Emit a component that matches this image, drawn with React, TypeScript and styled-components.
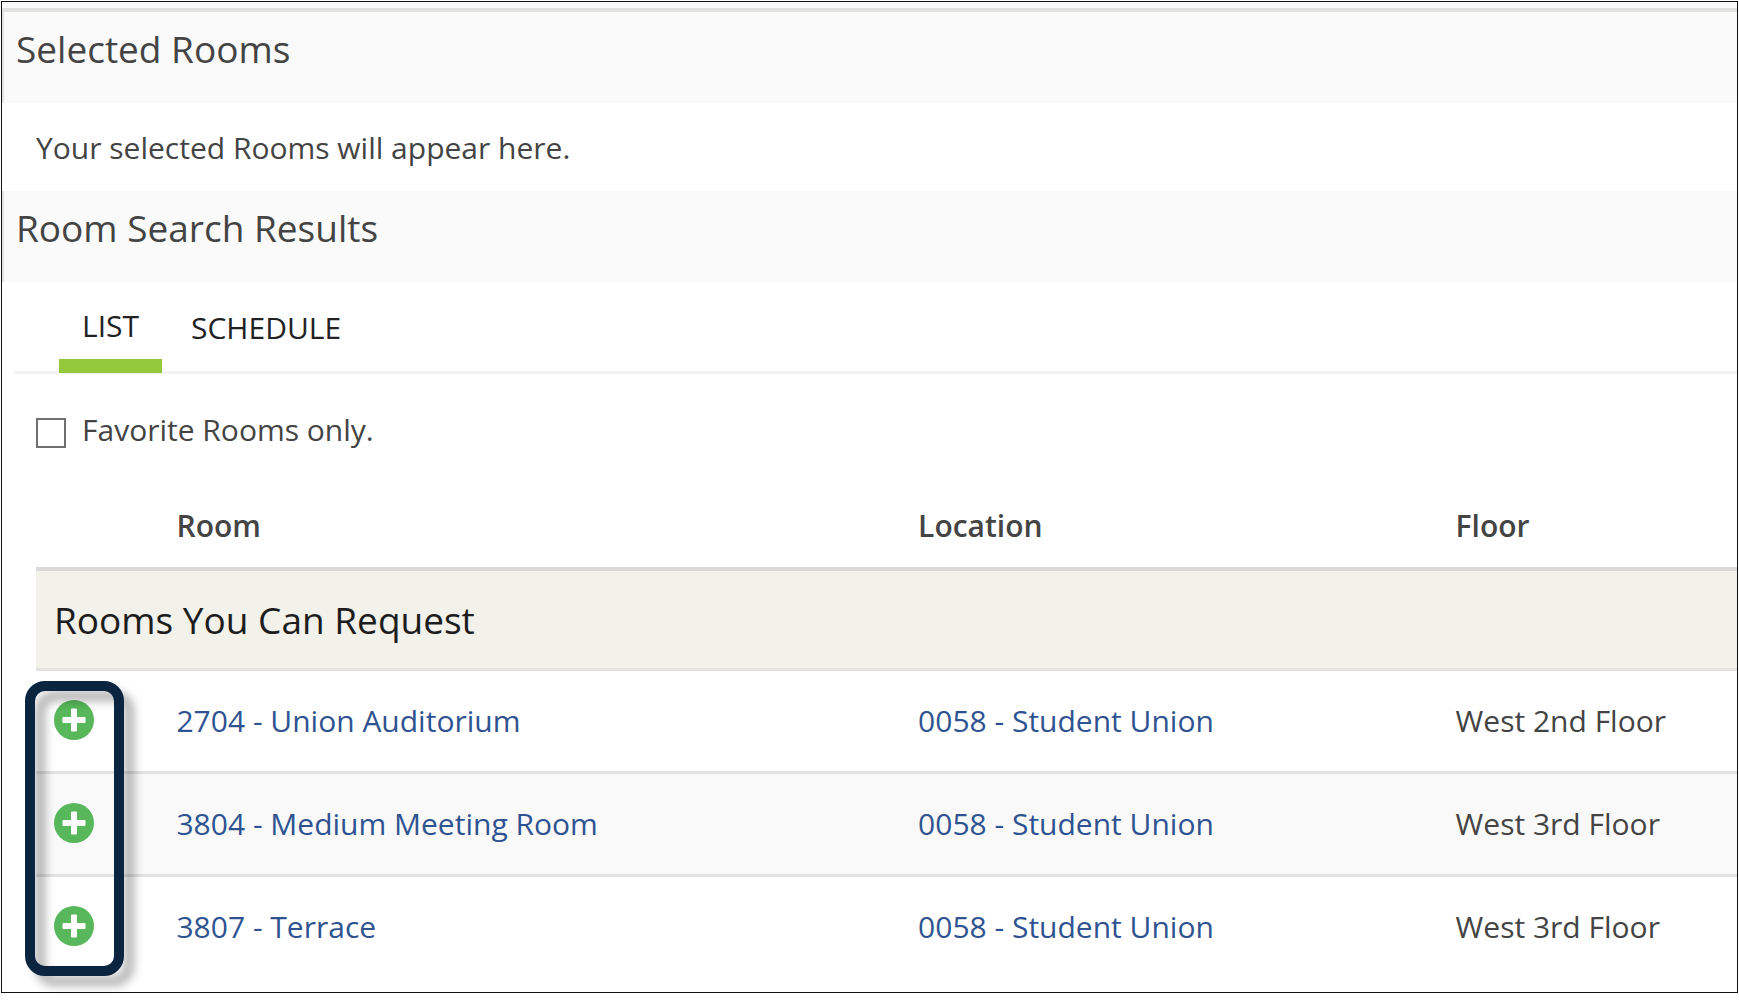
import React, { useState } from "react";
import styled, { createGlobalStyle } from "styled-components";

const GlobalStyle = createGlobalStyle`
  * { box-sizing: border-box; }
  body {
    margin: 0;
    background: #fff;
    color: #444;
    font: 30px/40px "Open Sans", "Noto Sans", sans-serif;
  }
  button, input { font: inherit; color: inherit; }
`;

const Frame = styled.main`
  margin: 1px;
  padding-bottom: 15px;
  border: 1px solid #111;
  background: #fff;
  overflow-x: clip;
`;

const TopRule = styled.div`
  height: 10px;
  background: #fafafa;
  border-bottom: 4px solid #e1e1df;
`;

const SectionHeader = styled.header`
  padding: 11px 12px 28px;
  background: #fafafa;
  border-left: 2px solid #e2e3e4;
`;

const SectionTitle = styled.h2`
  margin: 0;
  font-size: 37px;
  line-height: 52px;
  font-weight: 400;
`;

const Message = styled.p`
  margin: 0;
  padding: 25px 34px 23px;
`;

const TabBar = styled.div`
  display: flex;
  align-items: flex-end;
  gap: 6px;
  margin-left: 12px;
  padding: 24px 45px 0;
  border-bottom: 3px solid #f2f2f2;
`;

const Tab = styled.button<{ $active: boolean }>`
  margin: 0 0 -2px;
  padding: 0 23px ${(p) => (p.$active ? 13 : 11)}px;
  border: 0;
  border-bottom: 14px solid ${(p) => (p.$active ? "#95c93d" : "transparent")};
  background: none;
  color: #222;
  text-transform: uppercase;
  cursor: pointer;
`;

const FilterRow = styled.label`
  display: flex;
  align-items: center;
  gap: 16px;
  padding: 36px 34px 16px;
`;

const Checkbox = styled.input`
  appearance: none;
  width: 30px;
  height: 30px;
  margin: 6px 0 0;
  border: 2px solid #707070;
  background: #fff;
  &:checked { background: #95c93d; }
`;

const TableArea = styled.div`
  position: relative;
  margin-left: 34px;
`;

const Table = styled.table`
  width: 100%;
  table-layout: fixed;
  border-collapse: separate;
  border-spacing: 0;
`;

const ColumnHead = styled.th<{ $width?: string }>`
  width: ${(p) => p.$width ?? "auto"};
  padding: 40px 18px 21px;
  border-bottom: 4px solid #d9d9d9;
  text-align: left;
  font-weight: 600;
`;

const GroupHead = styled.th`
  padding: 23px 18px 22px;
  border-bottom: 3px solid #e2e2e0;
  background: #f2f1ea;
  color: #1d1d1d;
  text-align: left;
  font-size: 37px;
  line-height: 52px;
  font-weight: 400;
`;

const Row = styled.tr`
  background: #fff;
  &:nth-child(odd) { background: #f9f9f9; }
  &:not(:last-child) > td { border-bottom: 3px solid #e2e2e2; }
`;

const Cell = styled.td`
  padding: 30px 18px;
  white-space: nowrap;
`;

const ActionCell = styled.td`
  padding: 29px 18px 31px;
`;

const RoomLink = styled.a`
  color: #2f5391;
  text-decoration: none;
  &:hover { text-decoration: underline; }
`;

const AddButton = styled.button`
  display: block;
  width: 40px;
  height: 40px;
  padding: 0;
  border: 0;
  border-radius: 50%;
  background: none;
  cursor: pointer;
  svg { display: block; }
`;

const Highlight = styled.div`
  position: absolute;
  left: -11px;
  bottom: 1px;
  width: 99px;
  height: 295px;
  border: 10px solid #0b2540;
  border-radius: 20px;
  filter: drop-shadow(10px 10px 5px rgba(0, 0, 0, 0.3));
  pointer-events: none;
`;

const AddIcon = () => (
  <svg width="40" height="40" viewBox="0 0 40 40" aria-hidden="true">
    <circle cx="20" cy="20" r="20" fill="#57b75a" />
    <path
      d="M17 9.500Q17 8.500 18 8.500H22Q23 8.500 23 9.500V17H30.500Q31.500 17 31.500 18V22Q31.500 23 30.500 23H23V30.500Q23 31.500 22 31.500H18Q17 31.500 17 30.500V23H9.500Q8.500 23 8.500 22V18Q8.500 17 9.500 17H17Z"
      fill="#fff"
    />
  </svg>
);

const rooms = [
  { name: "2704 - Union Auditorium", location: "0058 - Student Union", floor: "West 2nd Floor" },
  { name: "3804 - Medium Meeting Room", location: "0058 - Student Union", floor: "West 3rd Floor" },
  { name: "3807 - Terrace", location: "0058 - Student Union", floor: "West 3rd Floor" },
];

const tabs = ["List", "Schedule"];

export default function App() {
  const [tab, setTab] = useState("List");
  return (
    <>
      <GlobalStyle />
      <Frame>
        <TopRule />
        <SectionHeader>
          <SectionTitle>Selected Rooms</SectionTitle>
        </SectionHeader>
        <Message>Your selected Rooms will appear here.</Message>
        <SectionHeader>
          <SectionTitle>Room Search Results</SectionTitle>
        </SectionHeader>
        <TabBar role="tablist">
          {tabs.map((t) => (
            <Tab key={t} type="button" role="tab" aria-selected={t === tab} $active={t === tab} onClick={() => setTab(t)}>
              {t}
            </Tab>
          ))}
        </TabBar>
        <FilterRow htmlFor="favorites">
          <Checkbox id="favorites" type="checkbox" />
          Favorite Rooms only.
        </FilterRow>
        <TableArea>
          <Table>
            <thead>
              <tr>
                <ColumnHead $width="7.2%" aria-label="Add" />
                <ColumnHead $width="43.6%">Room</ColumnHead>
                <ColumnHead $width="31.6%">Location</ColumnHead>
                <ColumnHead>Floor</ColumnHead>
              </tr>
            </thead>
            <tbody>
              <tr>
                <GroupHead colSpan={4}>Rooms You Can Request</GroupHead>
              </tr>
              {rooms.map((room) => (
                <Row key={room.name}>
                  <ActionCell>
                    <AddButton type="button" aria-label={`Add ${room.name}`}>
                      <AddIcon />
                    </AddButton>
                  </ActionCell>
                  <Cell><RoomLink href="#room">{room.name}</RoomLink></Cell>
                  <Cell><RoomLink href="#location">{room.location}</RoomLink></Cell>
                  <Cell>{room.floor}</Cell>
                </Row>
              ))}
            </tbody>
          </Table>
          <Highlight />
        </TableArea>
      </Frame>
    </>
  );
}
